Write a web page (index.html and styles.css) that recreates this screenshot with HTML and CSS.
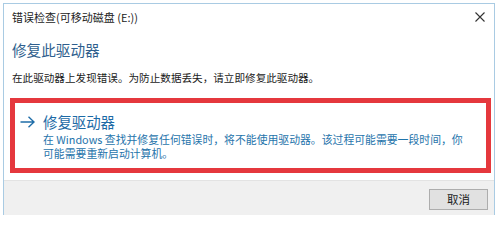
FILE: index.html
```html
<!DOCTYPE html>
<html lang="zh-CN">
<head>
<meta charset="utf-8">
<link rel="stylesheet" href="styles.css">
</head>
<body>
<div class="window">
  <div class="titlebar">
    <span class="title">错误检查(可移动磁盘 (E:))</span>
    <svg class="close" width="10" height="10" viewBox="0 0 10 10"><path d="M0.5 0.5 L9.5 9.5 M9.5 0.5 L0.5 9.5" stroke="#333" stroke-width="1.1" fill="none"/></svg>
  </div>
  <div class="main">
    <div class="instruction">修复此驱动器</div>
    <div class="message">在此驱动器上发现错误。为防止数据丢失，请立即修复此驱动器。</div>
    <div class="command">
      <svg class="arrow" width="15" height="12" viewBox="0 0 15 12"><path d="M0.5 6 H14 M8.5 0.8 L14 6 L8.5 11.2" stroke="#1f6da8" stroke-width="1.4" fill="none"/></svg>
      <div class="cmd-text">
        <div class="cmd-title">修复驱动器</div>
        <div class="cmd-desc">在 Windows 查找并修复任何错误时，将不能使用驱动器。该过程可能需要一段时间，你可能需要重新启动计算机。</div>
      </div>
    </div>
  </div>
  <div class="footer">
    <button class="btn">取消</button>
  </div>
</div>
</body>
</html>
```
FILE: styles.css
```css
html, body {
  margin: 0;
  padding: 0;
  background: #ffffff;
}
body {
  font-family: "Noto Sans CJK SC", "Noto Sans", sans-serif;
  color: #1a1a1a;
}
.window {
  margin: 3px 0 0 3px;
  width: 492px;
  height: 212px;
  box-sizing: border-box;
  border: 1px solid #a9cbe3;
  border-bottom: none;
  display: flex;
  flex-direction: column;
  background: #fff;
}
.titlebar {
  height: 25px;
  display: flex;
  align-items: center;
  justify-content: space-between;
  padding: 0 9px 0 8px;
  font-size: 11px;
  color: #222;
}
.close {
  display: block;
}
.main {
  flex: 1;
  display: flex;
  flex-direction: column;
}
.instruction {
  margin: 11px 0 0 8px;
  font-size: 14.6px;
  line-height: 20px;
  color: #2f5f8e;
}
.message {
  margin: 10px 0 0 8px;
  font-size: 10.6px;
  line-height: 16px;
  color: #1a1a1a;
}
.command {
  margin: 12px 0 0 6px;
  width: 481px;
  box-sizing: border-box;
  border: 5px solid #e5383d;
  padding: 9px 14px 8px 5px;
  display: flex;
  align-items: flex-start;
  gap: 8px;
}
.arrow {
  display: block;
  margin-top: 4px;
  flex: none;
}
.cmd-title {
  font-size: 14.4px;
  line-height: 20px;
  color: #1c6aa6;
}
.cmd-desc {
  font-size: 10.85px;
  line-height: 14px;
  color: #1f74ab;
}
.footer {
  margin-top: 6px;
  height: 35px;
  background: #f0f0f0;
  border-top: 1px solid #e3e3e3;
  display: flex;
  justify-content: flex-end;
  align-items: flex-start;
  padding: 8px 6px 0 0;
  box-sizing: border-box;
}
.btn {
  width: 59px;
  height: 21px;
  box-sizing: border-box;
  background: #e1e1e1;
  border: 1px solid #adadad;
  font-family: "Noto Sans CJK SC", "Noto Sans", sans-serif;
  font-size: 11.5px;
  color: #1a1a1a;
  padding: 0;
  line-height: 19px;
}
```
